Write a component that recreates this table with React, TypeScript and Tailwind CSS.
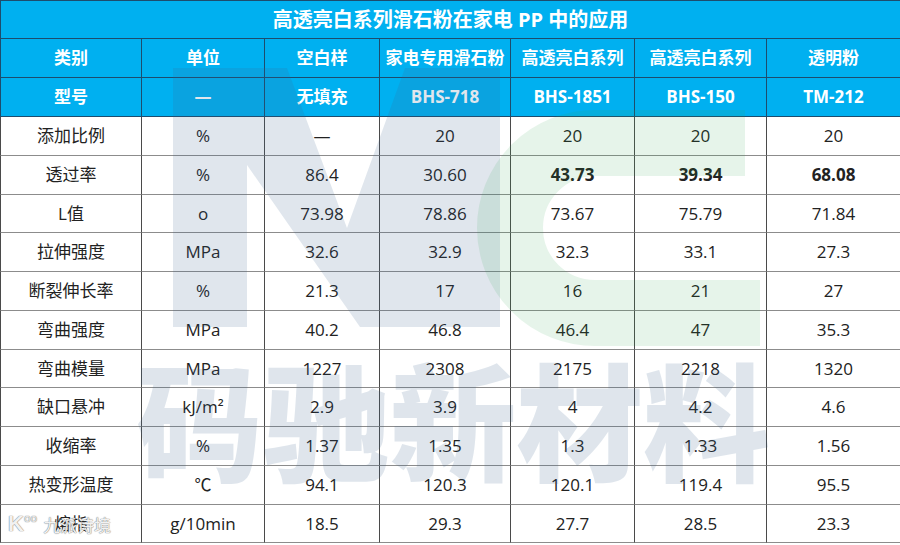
import React from "react";

const heads = ["类别", "单位", "空白样", "家电专用滑石粉", "高透亮白系列", "高透亮白系列", "透明粉"];
const models = ["型号", "—", "无填充", "BHS-718", "BHS-1851", "BHS-150", "TM-212"];
const rows: string[][] = [
  ["添加比例", "%", "—", "20", "20", "20", "20"],
  ["透过率", "%", "86.4", "30.60", "43.73", "39.34", "68.08"],
  ["L值", "o", "73.98", "78.86", "73.67", "75.79", "71.84"],
  ["拉伸强度", "MPa", "32.6", "32.9", "32.3", "33.1", "27.3"],
  ["断裂伸长率", "%", "21.3", "17", "16", "21", "27"],
  ["弯曲强度", "MPa", "40.2", "46.8", "46.4", "47", "35.3"],
  ["弯曲模量", "MPa", "1227", "2308", "2175", "2218", "1320"],
  ["缺口悬冲", "kJ/m²", "2.9", "3.9", "4", "4.2", "4.6"],
  ["收缩率", "%", "1.37", "1.35", "1.3", "1.33", "1.56"],
  ["热变形温度", "℃", "94.1", "120.3", "120.1", "119.4", "95.5"],
  ["熔指", "g/10min", "18.5", "29.3", "27.7", "28.5", "23.3"],
];

function HeadCell({ text, i }: { text: string; i: number }) {
  return (
    <div
      className={
        "flex items-center justify-center bg-[#00b0f0] text-white font-bold text-[17px] border-b border-b-[#1d4c6e] " +
        (i < 6 ? "border-r border-r-[#1d4c6e] " : "") +
        (i === 0 ? "border-l border-l-[#1d4c6e]" : "")
      }
    >
      {text}
    </div>
  );
}

export default function App() {
  return (
    <div
      className="relative w-[900px] h-[545px] bg-white overflow-hidden text-[#222]"
      style={{ fontFamily: '"Open Sans", "Noto Sans CJK SC", sans-serif' }}
    >
      <div className="grid grid-cols-[142px_123px_115px_131px_124px_132px_133px] grid-rows-[39px_39px_39px_repeat(11,38.75px)]">
        <div className="col-span-7 flex items-center justify-center bg-[#00b0f0] text-white font-bold text-[20px] border-t border-l border-b border-[#1d4c6e]">
          高透亮白系列滑石粉在家电 PP 中的应用
        </div>
        {heads.map((h, i) => (
          <HeadCell key={"h" + i} text={h} i={i} />
        ))}
        {models.map((h, i) => (
          <HeadCell key={"m" + i} text={h} i={i} />
        ))}
        {rows.map((r, ri) =>
          r.map((c, ci) => (
            <div
              key={ri + "-" + ci}
              className={
                "flex items-center justify-center text-[17px] border-b border-b-[#8c8c8c] " +
                (ci < 6 ? "border-r border-r-[#4a4a4a] " : "") +
                (ci === 0 ? "border-l border-l-[#4a4a4a] " : "") +
                (ri === 1 && ci >= 4 ? "font-bold" : "")
              }
            >
              {c}
            </div>
          ))
        )}
      </div>

      <svg
        className="absolute left-0 top-0 pointer-events-none"
        width="900"
        height="545"
        viewBox="0 0 900 545"
      >
        <polygon
          points="173,68 287,68 347,228 405,68 500,68 500,327 360,327 247,165 247,327 173,327"
          fill="#3c6590"
          opacity="0.16"
        />
        <path
          d="M 745 143 L 595 143 A 85 85 0 0 0 595 313 L 760 313"
          fill="none"
          stroke="#2ea550"
          strokeWidth="66"
          opacity="0.12"
        />
        <text
          x="136"
          y="472"
          fontSize="127"
          fontWeight="900"
          fill="#3c6590"
          opacity="0.16"
          textLength="634"
          lengthAdjust="spacing"
          style={{ fontFamily: '"Noto Sans CJK SC", sans-serif' }}
        >
          码驰新材料
        </text>
      </svg>

      <div className="absolute left-[8px] top-[512px] flex items-end gap-[4px] pointer-events-none text-white/90 [text-shadow:0_0_1px_#777,0_0_1px_#777]">
        <span className="text-[22px] font-bold leading-none" style={{ fontFamily: '"Liberation Sans", sans-serif' }}>
          K
        </span>
        <span className="text-[11px] leading-none -ml-[4px] mb-[12px]">oo</span>
        <span className="text-[17px] leading-none ml-[2px] mb-[1px]">九派诗境</span>
      </div>
    </div>
  );
}
